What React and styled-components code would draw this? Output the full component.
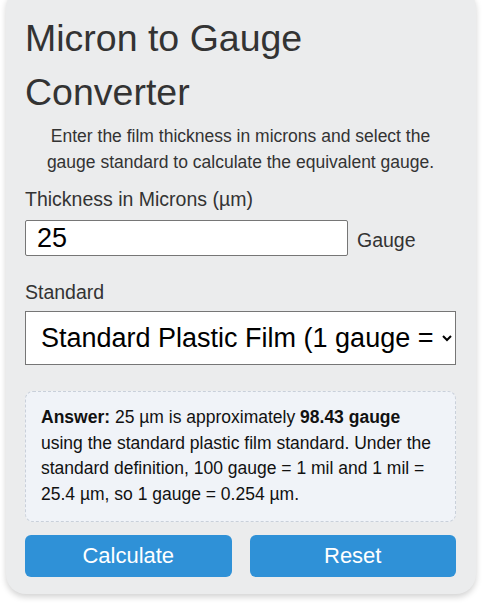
import React, { useState } from "react";
import styled, { createGlobalStyle } from "styled-components";

const GlobalStyle = createGlobalStyle`
  html, body {
    margin: 0;
    padding: 0;
    background: #ffffff;
    font-family: "Liberation Sans", Arial, sans-serif;
  }
  * { box-sizing: border-box; }
`;

const Page = styled.div`
  padding: 0 25px 10px 6px;
`;

const Card = styled.div`
  margin-top: -12px;
  width: 470px;
  background: #ebeced;
  border-radius: 20px;
  box-shadow: 0 3px 6px rgba(0, 0, 0, 0.18);
  padding: 23px 20px 17px 19px;
  display: flex;
  flex-direction: column;
`;

const Title = styled.h1`
  margin: 0;
  font-size: 37.5px;
  line-height: 54px;
  font-weight: 400;
  color: #333333;
`;

const Intro = styled.p`
  margin: 4px 0 0;
  font-size: 17.5px;
  line-height: 26px;
  color: #333333;
  text-align: center;
`;

const Label = styled.label`
  display: block;
  margin: ${(p) => p.$top}px 0 ${(p) => p.$bottom}px;
  font-size: 19.5px;
  line-height: 24px;
  color: #333333;
`;

const InputRow = styled.div`
  display: flex;
  align-items: baseline;
  gap: 9px;
`;

const NumberInput = styled.input`
  width: 323px;
  height: 36px;
  padding: 1px 11px;
  border: 1px solid #767676;
  border-radius: 2px;
  background: #ffffff;
  font-family: "Liberation Sans", Arial, sans-serif;
  font-size: 27px;
  color: #000000;
  outline: none;
`;

const Unit = styled.span`
  font-size: 19.5px;
  line-height: 24px;
  color: #333333;
`;

const Select = styled.select`
  width: 431px;
  height: 54px;
  padding: 0 2px 0 11px;
  border: 1px solid #767676;
  border-radius: 0;
  background: #ffffff;
  font-family: "Liberation Sans", Arial, sans-serif;
  font-size: 27px;
  color: #000000;
  outline: none;
`;

const Answer = styled.div`
  margin-top: 26px;
  width: 431px;
  padding: 13px 15px 13px;
  background: #f0f3f8;
  border: 1px dashed #c9d0da;
  border-radius: 8px;
  font-size: 17.5px;
  line-height: 25.7px;
  color: #111111;
  b { font-weight: 700; }
`;

const Buttons = styled.div`
  margin-top: 13px;
  width: 431px;
  display: grid;
  grid-template-columns: 1fr 1fr;
  gap: 18px;
`;

const Button = styled.button`
  height: 42px;
  border: none;
  border-radius: 6px;
  background: #2f91d7;
  color: #ffffff;
  font-family: "Liberation Sans", Arial, sans-serif;
  font-size: 22px;
  cursor: pointer;
`;

export default function App() {
  const [microns, setMicrons] = useState("25");
  const [standard, setStandard] = useState("plastic");

  return (
    <>
      <GlobalStyle />
      <Page>
        <Card>
          <Title>Micron to Gauge Converter</Title>
          <Intro>
            Enter the film thickness in microns and select the gauge standard to
            calculate the equivalent gauge.
          </Intro>
          <Label $top={12} $bottom={9} htmlFor="microns">
            Thickness in Microns (µm)
          </Label>
          <InputRow>
            <NumberInput
              id="microns"
              type="text"
              value={microns}
              onChange={(e) => setMicrons(e.target.value)}
            />
            <Unit>Gauge</Unit>
          </InputRow>
          <Label $top={24} $bottom={7} htmlFor="standard">
            Standard
          </Label>
          <Select
            id="standard"
            value={standard}
            onChange={(e) => setStandard(e.target.value)}
          >
            <option value="plastic">Standard Plastic Film (1 gauge = 0.254 µm)</option>
          </Select>
          <Answer>
            <b>Answer:</b> 25 µm is approximately <b>98.43 gauge</b> using the
            standard plastic film standard. Under the standard definition, 100
            gauge = 1 mil and 1 mil = 25.4 µm, so 1 gauge = 0.254 µm.
          </Answer>
          <Buttons>
            <Button>Calculate</Button>
            <Button>Reset</Button>
          </Buttons>
        </Card>
      </Page>
    </>
  );
}
